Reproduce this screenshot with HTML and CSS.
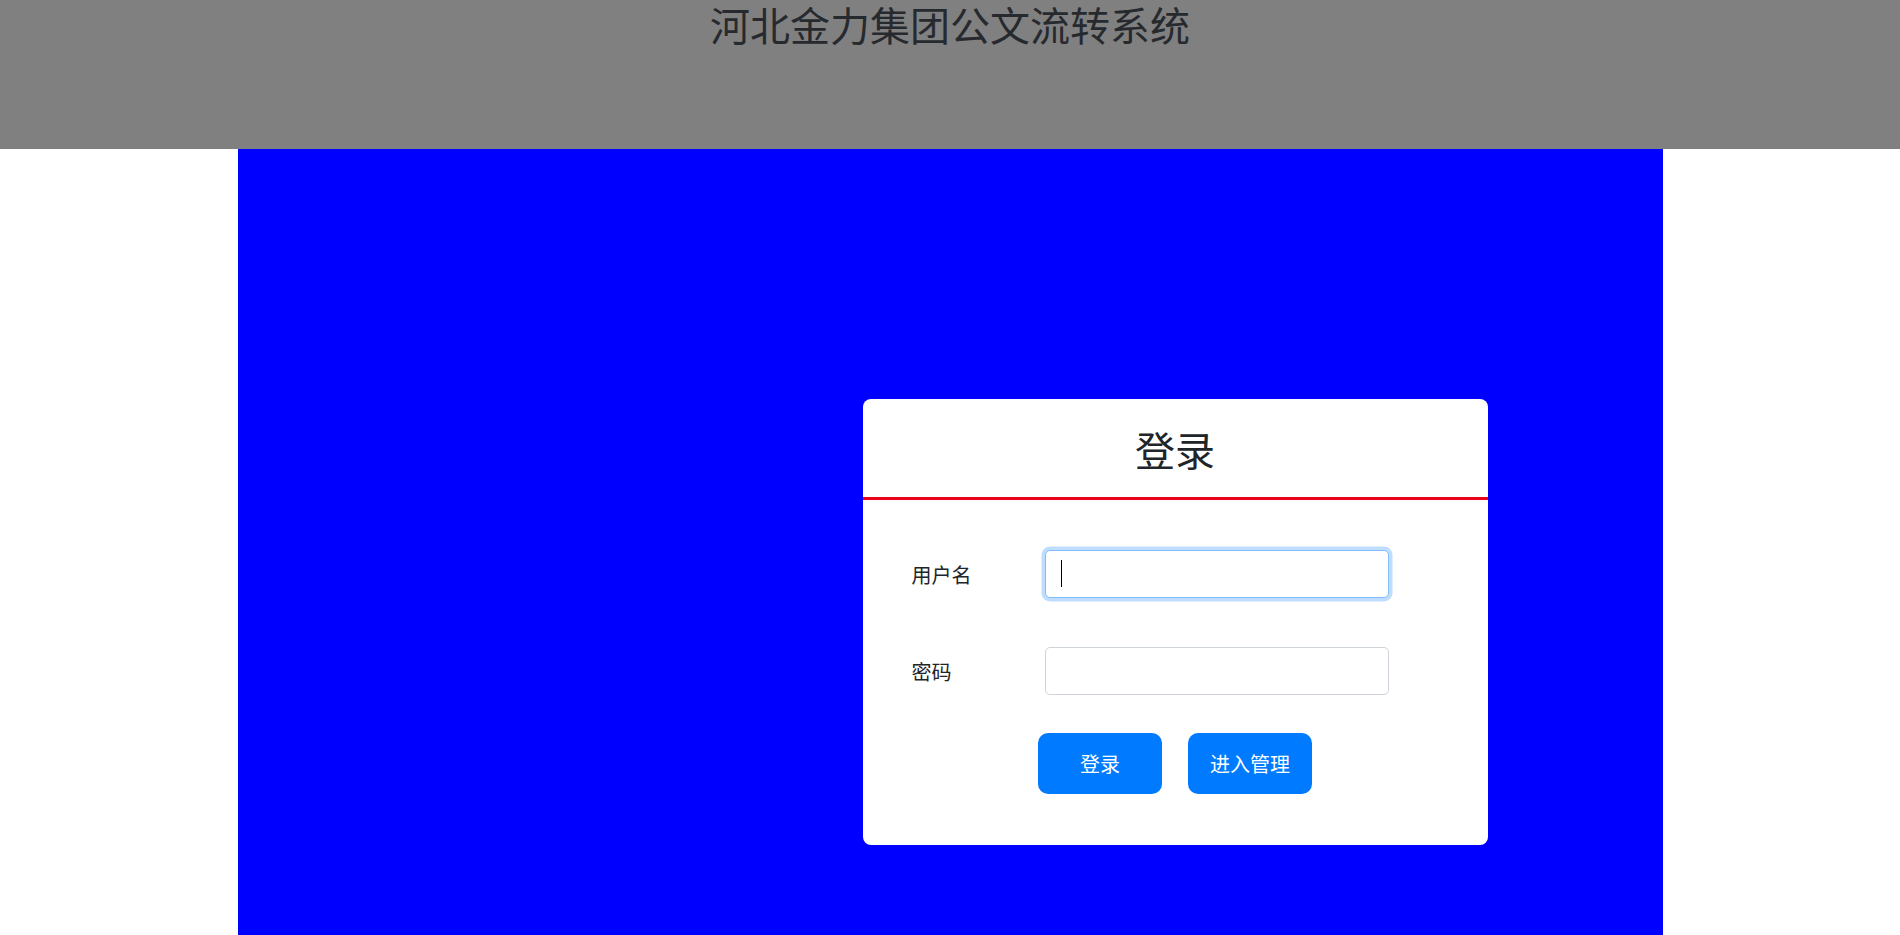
FILE: index.html
```html
<!DOCTYPE html>
<html lang="zh-CN">
<head>
<meta charset="utf-8">
<title>河北金力集团公文流转系统</title>
<link rel="stylesheet" href="styles.css">
</head>
<body>
<header class="top">
  <h1 class="site-title">河北金力集团公文流转系统</h1>
</header>
<main class="stage">
  <section class="login-card">
    <div class="card-head">
      <h2 class="card-title">登录</h2>
    </div>
    <form class="card-body">
      <div class="form-row">
        <label class="form-label" for="user">用户名</label>
        <div class="field">
          <input class="form-input is-focused" id="user" type="text">
          <span class="fake-caret"></span>
        </div>
      </div>
      <div class="form-row form-row-last">
        <label class="form-label" for="pwd">密码</label>
        <div class="field">
          <input class="form-input" id="pwd" type="password">
        </div>
      </div>
      <div class="actions">
        <button class="btn" type="button">登录</button>
        <button class="btn" type="button">进入管理</button>
      </div>
    </form>
  </section>
</main>
</body>
</html>
```
FILE: styles.css
```css
* { box-sizing: border-box; }

html, body {
  margin: 0;
  padding: 0;
  background: #ffffff;
  font-family: "Noto Sans CJK SC", "Noto Sans", sans-serif;
  color: #212529;
}

.top {
  height: 149px;
  background: #808080;
  text-align: center;
  overflow: hidden;
}

.site-title {
  margin: 0;
  font-size: 40px;
  line-height: 48px;
  font-weight: 400;
  color: #262a2e;
}

.stage {
  width: 75%;
  margin: 0 auto;
  min-height: calc(100vh - 149px);
  background: #0000ff;
  display: flex;
  justify-content: flex-end;
  align-items: flex-start;
  padding: 250px 175px 0 0;
}

.login-card {
  width: 625px;
  background: #ffffff;
  border-radius: 8px;
}

.card-head {
  padding: 26px 0 24px;
  border-bottom: 3px solid #e8001c;
  text-align: center;
}

.card-title {
  margin: 0;
  font-size: 40px;
  line-height: 48px;
  font-weight: 400;
  color: #212529;
}

.card-body {
  margin: 0;
  padding: 50px 49px 51px;
}

.form-row {
  display: flex;
  align-items: center;
  margin-bottom: 49px;
}

.form-row-last {
  margin-bottom: 38px;
}

.form-label {
  width: 133px;
  font-size: 20px;
  line-height: 30px;
  padding-top: 2px;
  color: #212529;
}

.field {
  position: relative;
  width: 344px;
}

.form-input {
  display: block;
  width: 100%;
  height: 48px;
  padding: 8px 16px;
  font-size: 20px;
  font-family: inherit;
  border: 1px solid #ced4da;
  border-radius: 5px;
  background: #ffffff;
  outline: none;
}

.form-input.is-focused {
  border-color: #80bdff;
  box-shadow: 0 0 0 3.5px rgba(0, 123, 255, 0.25);
}

.fake-caret {
  position: absolute;
  left: 16px;
  top: 10px;
  width: 1px;
  height: 27px;
  background: #000000;
}

.actions {
  display: flex;
  justify-content: center;
  gap: 26px;
}

.btn {
  width: 124px;
  height: 61px;
  border: none;
  border-radius: 10px;
  background: #007bff;
  color: #ffffff;
  font-family: inherit;
  font-size: 20px;
  line-height: 30px;
  padding: 0;
  cursor: pointer;
}
```
